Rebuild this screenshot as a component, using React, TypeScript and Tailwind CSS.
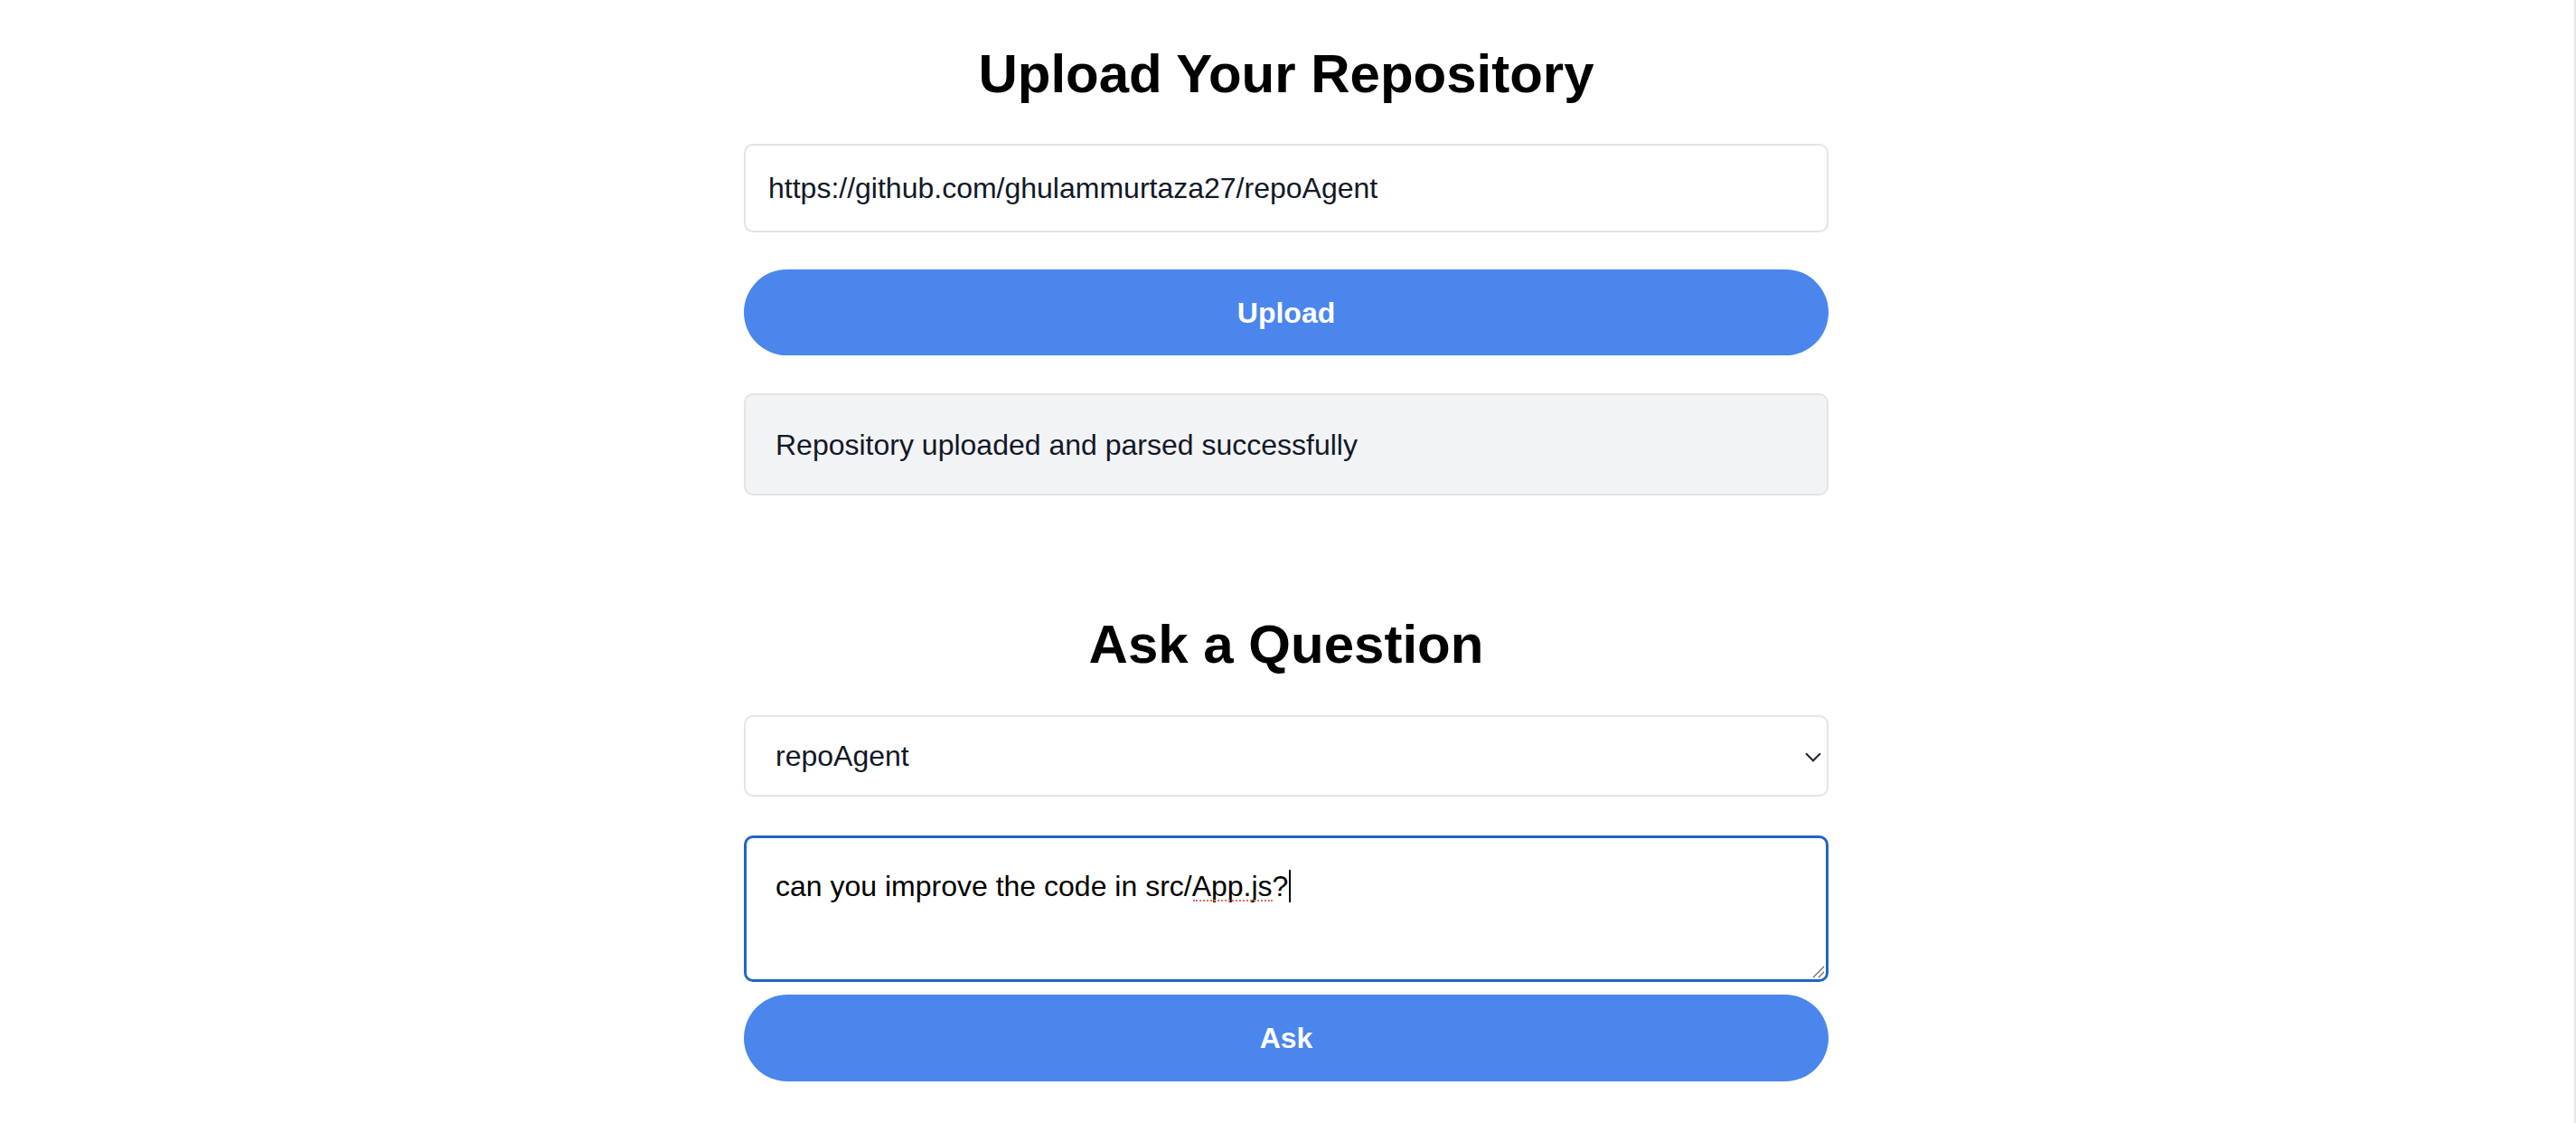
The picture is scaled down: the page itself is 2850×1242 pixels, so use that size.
import React from "react";

export default function App() {
  return (
    <div className="flex min-h-[1242px] bg-white font-['Liberation_Sans',Arial,sans-serif]">
      <div className="flex flex-1 flex-col items-center">
        <div className="flex w-[1200px] flex-col">
          <h1 className="mt-[47px] h-[69px] text-center text-[60px] font-bold leading-[69px] text-black">
            Upload Your Repository
          </h1>
          <input
            className="mt-[43px] h-[98px] rounded-[10px] border-2 border-[#e4e4e7] bg-white px-[25px] text-[32px] text-[#111827] outline-none"
            defaultValue="https://github.com/ghulammurtaza27/repoAgent"
          />
          <button className="mt-[41px] h-[95px] rounded-full bg-[#4a86ec] text-[32px] font-bold text-white">
            Upload
          </button>
          <div className="mt-[42px] flex h-[113px] items-center rounded-[10px] border-2 border-[#e4e4e7] bg-[#f2f3f5] px-[33px] text-[32px] text-[#111827]">
            Repository uploaded and parsed successfully
          </div>
          <h2 className="mt-[130px] h-[69px] text-center text-[60px] font-bold leading-[69px] text-black">
            Ask a Question
          </h2>
          <div className="relative mt-[44px] h-[90px]">
            <select
              className="h-full w-full appearance-none rounded-[10px] border-2 border-[#e4e4e7] bg-white px-[33px] text-[32px] text-[#111827] outline-none"
              defaultValue="repoAgent"
            >
              <option value="repoAgent">repoAgent</option>
            </select>
            <svg
              className="pointer-events-none absolute left-[1174px] top-[41px]"
              width="18"
              height="11"
              viewBox="0 0 18 11"
              fill="none"
            >
              <path d="M1 1.2 L9 9.2 L17 1.2" stroke="#1f2937" strokeWidth="2.2" />
            </svg>
          </div>
          <div className="relative mt-[43px] h-[162px]">
            <textarea
              className="block h-full w-full resize-none rounded-[10px] border-[3px] border-[#2463c9] bg-white px-[32px] pt-[35px] text-[32px] leading-[37px] text-black outline-none"
              defaultValue="can you improve the code in src/App.js?"
              spellCheck={false}
            />
            <div className="pointer-events-none absolute left-[497px] top-[71px] h-0 w-[88px] border-t-[2px] border-dotted border-[#e46a5e]" />
            <div className="pointer-events-none absolute left-[603px] top-[38px] h-[36px] w-[2px] bg-black" />
            <svg
              className="pointer-events-none absolute left-[1180px] top-[142px]"
              width="16"
              height="16"
              viewBox="0 0 16 16"
              fill="none"
            >
              <path d="M15 3 L3 15 M15 9 L9 15" stroke="#6b6b6b" strokeWidth="1.3" />
            </svg>
          </div>
          <button className="mt-[14px] h-[96px] rounded-full bg-[#4a86ec] text-[32px] font-bold text-white">
            Ask
          </button>
        </div>
      </div>
      <div className="flex w-[4px] justify-end">
        <div className="w-[2px] bg-[#e6e6e6]" />
      </div>
    </div>
  );
}
